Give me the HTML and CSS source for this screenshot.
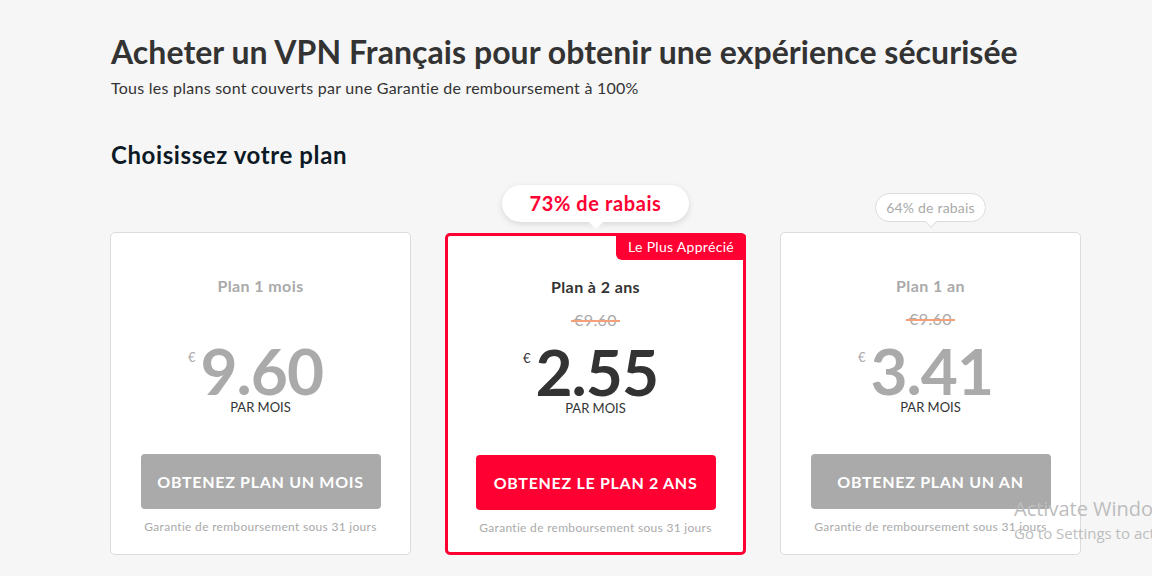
FILE: index.html
```html
<!DOCTYPE html>
<html lang="fr">
<head>
<meta charset="utf-8">
<title>Acheter un VPN Français</title>
<link rel="stylesheet" href="styles.css">
</head>
<body>
<main class="page">
  <h1 class="title">Acheter un VPN Français pour obtenir une expérience sécurisée</h1>
  <p class="subtitle">Tous les plans sont couverts par une Garantie de remboursement à 100%</p>
  <h2 class="section-title">Choisissez votre plan</h2>

  <div class="plans">
    <div class="plan-col">
      <div class="badge-slot"></div>
      <div class="card">
        <div class="plan-name">Plan 1 mois</div>
        <div class="old-price hidden"><span class="strike">€9.60</span></div>
        <div class="price"><span class="cur">€</span><span class="amount">9.60</span></div>
        <div class="per">PAR MOIS</div>
        <a class="btn" href="#">OBTENEZ PLAN UN MOIS</a>
        <div class="guarantee">Garantie de remboursement sous 31 jours</div>
      </div>
    </div>

    <div class="plan-col">
      <div class="badge-slot">
        <div class="badge badge-big">73% de rabais</div>
      </div>
      <div class="card featured">
        <div class="ribbon">Le Plus Apprécié</div>
        <div class="plan-name">Plan à 2 ans</div>
        <div class="old-price"><span class="strike">€9.60</span></div>
        <div class="price"><span class="cur">€</span><span class="amount">2.55</span></div>
        <div class="per">PAR MOIS</div>
        <a class="btn btn-red" href="#">OBTENEZ LE PLAN 2 ANS</a>
        <div class="guarantee">Garantie de remboursement sous 31 jours</div>
      </div>
    </div>

    <div class="plan-col">
      <div class="badge-slot">
        <div class="badge badge-small">64% de rabais</div>
      </div>
      <div class="card">
        <div class="plan-name">Plan 1 an</div>
        <div class="old-price"><span class="strike">€9.60</span></div>
        <div class="price"><span class="cur">€</span><span class="amount">3.41</span></div>
        <div class="per">PAR MOIS</div>
        <a class="btn" href="#">OBTENEZ PLAN UN AN</a>
        <div class="guarantee">Garantie de remboursement sous 31 jours</div>
      </div>
    </div>
  </div>
</main>

<div class="watermark">
  <div class="wm-title">Activate Windows</div>
  <div class="wm-sub">Go to Settings to activate Windows.</div>
</div>
</body>
</html>
```

FILE: styles.css
```css
* { box-sizing: border-box; }

html, body {
  margin: 0;
  padding: 0;
  background: #f6f6f6;
  overflow: hidden;
}

body {
  font-family: Lato, "Open Sans", sans-serif;
  color: #333;
  width: 1152px;
  height: 576px;
  position: relative;
}

.page {
  padding: 32px 0 0 111px;
}

.title {
  margin: 0;
  font-size: 32px;
  line-height: 40px;
  font-weight: 700;
  letter-spacing: 0.05px;
  color: #333;
}

.subtitle {
  margin: 6px 0 0;
  font-size: 16px;
  line-height: 20px;
  letter-spacing: 0.25px;
  color: #333;
}

.section-title {
  margin: 42px 0 0;
  font-size: 24px;
  line-height: 30px;
  font-weight: 700;
  letter-spacing: 0.6px;
  color: #0d1a26;
}

.plans {
  display: grid;
  grid-template-columns: repeat(3, 301px);
  column-gap: 34px;
  margin-left: -1px;
}

.plan-col {
  display: flex;
  flex-direction: column;
}

.badge-slot {
  height: 62px;
  display: flex;
  align-items: flex-end;
  justify-content: center;
  padding-bottom: 10px;
}

.badge {
  position: relative;
  background: #fff;
  text-align: center;
}

.badge::after {
  content: "";
  position: absolute;
  left: 50%;
  bottom: -5px;
  width: 10px;
  height: 10px;
  background: #fff;
  transform: translateX(-50%) rotate(45deg);
}

.badge-big {
  width: 187px;
  height: 37px;
  line-height: 37px;
  border-radius: 19px;
  font-size: 20px;
  font-weight: 700;
  letter-spacing: 0.6px;
  color: #ff0033;
  box-shadow: 0 2px 6px rgba(0, 0, 0, 0.13);
}

.badge-small {
  width: 111px;
  height: 29px;
  line-height: 27px;
  border-radius: 15px;
  border: 1px solid #dcdcdc;
  font-size: 14px;
  letter-spacing: 0.2px;
  color: #aaa;
}

.badge-small::after {
  width: 8px;
  height: 8px;
  bottom: -5px;
  border-right: 1px solid #dcdcdc;
  border-bottom: 1px solid #dcdcdc;
}

.card {
  position: relative;
  height: 323px;
  background: #fff;
  border: 1px solid #dcdcdc;
  border-radius: 5px;
  display: flex;
  flex-direction: column;
  align-items: center;
  padding-top: 42px;
  color: #aaa;
}

.card.featured {
  border: 3px solid #ff0033;
  padding-top: 40px;
  color: #333;
  height: 322px;
  margin-top: 1px;
}

.ribbon {
  position: absolute;
  top: -2px;
  right: -3px;
  height: 26px;
  line-height: 26px;
  padding: 0 12px;
  background: #ff0033;
  color: #fff;
  font-size: 14px;
  letter-spacing: 0.3px;
  border-bottom-left-radius: 6px;
  border-top-right-radius: 3px;
}

.plan-name {
  font-size: 16px;
  line-height: 22px;
  font-weight: 700;
  letter-spacing: 0.4px;
}

.card.featured .plan-name { color: #333; }

.old-price {
  margin-top: 12px;
  font-size: 16px;
  line-height: 20px;
  color: #aaa;
  letter-spacing: 0.4px;
}

.strike {
  position: relative;
  display: inline-block;
  padding: 0 3px;
}

.strike::after {
  content: "";
  position: absolute;
  left: 0;
  right: 0;
  top: 10px;
  height: 2px;
  background: #f4a07a;
}

.old-price.hidden { visibility: hidden; }

.price {
  margin-top: 16px;
  display: flex;
  align-items: flex-start;
  margin-left: -10px;
}

.cur {
  font-size: 13px;
  line-height: 13px;
  margin-top: 6px;
  margin-right: 5px;
}

.amount {
  font-size: 64px;
  line-height: 52px;
  font-weight: 700;
  letter-spacing: -1px;
  color: #aaa;
}

.card.featured .amount { color: #333; }

.per {
  margin-top: 2px;
  font-size: 13px;
  line-height: 16px;
  color: #333;
}

.btn {
  margin-top: 39px;
  width: 240px;
  height: 55px;
  border-radius: 4px;
  background: #aaaaaa;
  color: #fff;
  font-size: 16px;
  font-weight: 700;
  letter-spacing: 0.7px;
  text-decoration: none;
  display: flex;
  align-items: center;
  justify-content: center;
}

.btn-red { background: #ff0033; }

.guarantee {
  margin-top: 10px;
  font-size: 12px;
  line-height: 16px;
  letter-spacing: 0.3px;
  color: #aaa;
}

.watermark {
  position: absolute;
  left: 1014px;
  top: 496px;
  white-space: nowrap;
  color: #bdbdbd;
  font-family: "Open Sans", sans-serif;
  pointer-events: none;
}

.wm-title {
  font-size: 20px;
  line-height: 26px;
}

.wm-sub {
  font-size: 15px;
  line-height: 20px;
  margin-top: 1px;
}
```
